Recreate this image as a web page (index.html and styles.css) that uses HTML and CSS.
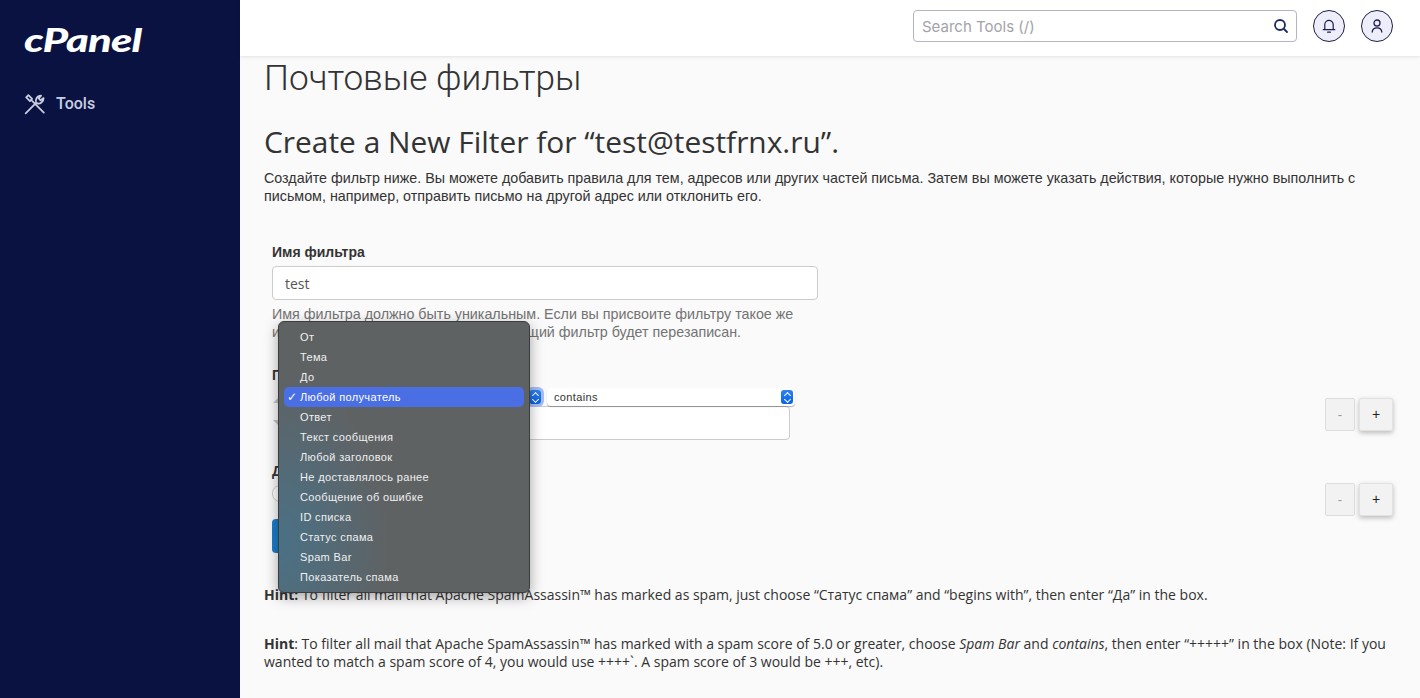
FILE: index.html
```html
<!DOCTYPE html>
<html lang="ru">
<head>
<meta charset="utf-8">
<title>Почтовые фильтры</title>
<link rel="stylesheet" href="styles.css">
</head>
<body>
<div class="app">
  <aside class="sidebar">
    <div class="logo">cPanel</div>
    <nav class="nav">
      <a class="nav-item">
        <svg class="nav-icon" viewBox="0 0 20 20" fill="none" stroke="currentColor" stroke-width="1.6" stroke-linecap="round" stroke-linejoin="round">
          <path d="M1.5 18.5 L11 9 C10 6.5 11.5 2.4 15.5 2.4 L13.4 5 L15 6.6 L17.8 4.6 C18 8 14.5 10.5 11.6 9.2"/>
          <path d="M2 4 L4 2 L7.4 5.4 L5.4 7.4 Z M7.4 7.2 L18 17.8"/>
        </svg>
        <span>Tools</span>
      </a>
    </nav>
  </aside>
  <div class="main">
    <header class="topbar">
      <div class="search">
        <span class="search-text">Search Tools (/)</span>
        <svg class="search-icon" viewBox="0 0 16 16" fill="none" stroke="#1b2a5e" stroke-width="1.8" stroke-linecap="round"><circle cx="7" cy="7" r="5"/><path d="M11 11 L14 14"/></svg>
      </div>
      <button class="round-btn" aria-label="Notifications">
        <svg viewBox="0 0 16 16" fill="none" stroke="#1b1f4b" stroke-width="1.2" stroke-linecap="round" stroke-linejoin="round"><path d="M2.2 11.6 H13.8 M3.8 11.6 V6.6 A4.2 4.2 0 0 1 12.2 6.6 V11.6"/><path d="M6.6 14.2 H9.4"/></svg>
      </button>
      <button class="round-btn" aria-label="User">
        <svg viewBox="0 0 16 16" fill="none" stroke="#1b1f4b" stroke-width="1.3" stroke-linecap="round"><circle cx="8" cy="5" r="3"/><path d="M3.2 14 C3.4 10.8 5.6 9.8 8 9.8 C10.4 9.8 12.6 10.8 12.8 14"/></svg>
      </button>
    </header>
    <main class="content">
      <h1 class="title">Почтовые фильтры</h1>
      <h2 class="subtitle">Create a New Filter for “test@testfrnx.ru”.</h2>
      <p class="intro">Создайте фильтр ниже. Вы можете добавить правила для тем, адресов или других частей письма. Затем вы можете указать действия, которые нужно выполнить с письмом, например, отправить письмо на другой адрес или отклонить его.</p>

      <form class="form">
        <label class="label">Имя фильтра</label>
        <div class="name-input">test</div>
        <p class="help">Имя фильтра должно быть уникальным. Если вы присвоите фильтру такое же имя, как у существующего, существующий фильтр будет перезаписан.</p>

        <label class="label rules-label">Правила</label>
        <div class="rule">
          <div class="rule-fields">
            <div class="selects">
              <div class="select select-open"><span>Любой получатель</span><i class="stepper"></i></div>
              <div class="select select-wide"><span>contains</span><i class="stepper"></i></div>
            </div>
            <div class="value-input"></div>
          </div>
          <div class="pm">
            <button type="button" class="pm-btn minus">-</button>
            <button type="button" class="pm-btn plus">+</button>
          </div>
        </div>

        <label class="label actions-label">Действия</label>
        <div class="rule action">
          <div class="action-select"></div>
          <div class="pm">
            <button type="button" class="pm-btn minus">-</button>
            <button type="button" class="pm-btn plus">+</button>
          </div>
        </div>

        <button type="button" class="create">Создать</button>
      </form>

      <p class="hint"><b>Hint:</b> To filter all mail that Apache SpamAssassin™ has marked as spam, just choose “Статус спама” and “begins with”, then enter “Да” in the box.</p>
      <p class="hint hint-2"><b>Hint</b>: To filter all mail that Apache SpamAssassin™ has marked with a spam score of 5.0 or greater, choose <em>Spam Bar</em> and <em>contains</em>, then enter “+++++” in the box (Note: If you wanted to match a spam score of 4, you would use ++++`. A spam score of 3 would be +++, etc).</p>
    </main>
  </div>
</div>

<ul class="menu">
  <li>От</li>
  <li>Тема</li>
  <li>До</li>
  <li class="selected">Любой получатель</li>
  <li>Ответ</li>
  <li>Текст сообщения</li>
  <li>Любой заголовок</li>
  <li>Не доставлялось ранее</li>
  <li>Сообщение об ошибке</li>
  <li>ID списка</li>
  <li>Статус спама</li>
  <li>Spam Bar</li>
  <li>Показатель спама</li>
</ul>
</body>
</html>
```

FILE: styles.css
```css
* { box-sizing: border-box; }
html, body { margin: 0; height: 100%; overflow: hidden; }
body { font-family: "Liberation Sans", Arial, sans-serif; color: #333; background: #fafafa; }

.app { display: flex; height: 698px; }

.sidebar { width: 240px; flex: none; background: #0a1241; color: #fff; padding: 24px 24px 0; }
.logo { font-family: Lato, sans-serif; font-weight: 900; font-style: italic; font-size: 32px; line-height: 32px; letter-spacing: -0.6px; color: #fff; transform: scaleX(1.36); transform-origin: left center; }
.nav { margin-top: 36px; }
.nav-item { display: flex; align-items: center; gap: 10px; color: #c8cfe0; font-family: Roboto, sans-serif; font-weight: 500; font-size: 16px; line-height: 24px; }
.nav-icon { width: 22px; height: 22px; flex: none; }

.main { flex: 1; min-width: 0; display: flex; flex-direction: column; }
.topbar { height: 56px; flex: none; background: #fff; box-shadow: 0 1px 3px rgba(0,0,0,.10); display: flex; align-items: center; justify-content: flex-end; gap: 16px; padding: 0 27px 4px 0; position: relative; z-index: 1; }
.search { width: 384px; height: 32px; border: 1px solid #b4b4c4; border-radius: 4px; background: #fff; display: flex; align-items: center; justify-content: space-between; padding: 0 7px 0 8px; }
.search-text { font-family: Inter, sans-serif; font-size: 15px; color: #a3a3a8; }
.search-icon { width: 16px; height: 16px; }
.round-btn { width: 32px; height: 32px; padding: 7px; border-radius: 50%; border: 1px solid #1b1f4b; background: #eeeefa; display: block; }
.round-btn svg { display: block; width: 16px; height: 16px; }

.content { flex: 1; padding: 0 24px; }
.title { margin: 0; font-family: Roboto, sans-serif; font-weight: 300; font-size: 35.2px; line-height: 44px; color: #333; }
.subtitle { margin: 21px 0 0; font-family: "Open Sans", sans-serif; font-weight: 400; font-size: 29.9px; line-height: 42px; color: #333; }
.intro { margin: 6px 0 0; font-size: 14.3px; line-height: 18.4px; color: #333; }

.form { margin-top: 36px; padding-left: 8px; }
.label { display: block; font-weight: 700; font-size: 14px; line-height: 20px; color: #333; }
.name-input { width: 546px; height: 34px; margin-top: 4px; border: 1px solid #ccc; border-radius: 4px; background: #fff; padding: 0 12px; font-family: "Open Sans", sans-serif; font-size: 14px; line-height: 34px; color: #555; }
.help { width: 530px; margin: 5px 0 0; font-size: 14.3px; line-height: 18px; color: #737373; }

.rules-label { margin-top: 24px; }
.rule { display: flex; align-items: flex-start; justify-content: space-between; margin-top: 3px; }
.rule-fields { width: 518px; flex: none; position: relative; }
.rule-fields::before, .rule-fields::after { content: ""; position: absolute; left: 1px; border-left: 5px solid transparent; border-bottom: 5px solid #c4c4c4; }
.rule-fields::before { top: 10px; }
.rule-fields::after { top: 32px; border-bottom: 0; border-top: 5px solid #c4c4c4; }
.selects { display: flex; gap: 4px; height: 18px; width: 530px; }
.select { height: 18px; background: #fff; border-radius: 4px; font-size: 11px; line-height: 18px; padding-left: 7px; display: flex; justify-content: space-between; align-items: center; box-shadow: 0 1px 1px rgba(0,0,0,.3); color: #333; letter-spacing: .35px; flex: none; }
.select-open { width: 271px; background: transparent; box-shadow: none; padding-right: 2px; }
.select-open span { visibility: hidden; }
.select-open .stepper { box-shadow: 0 0 0 3px #a9bdf3; }
.select-wide { width: 248px; padding-right: 2px; }
.stepper { display: block; width: 12px; height: 14px; border-radius: 3px; background: linear-gradient(#2b82f6, #0a60e0); position: relative; flex: none; }
.stepper::before, .stepper::after { content: ""; position: absolute; left: 4px; width: 4px; height: 4px; border-left: 1px solid #fff; border-top: 1px solid #fff; transform: rotate(45deg); }
.stepper::before { top: 3px; }
.stepper::after { top: 7px; transform: rotate(225deg); }
.value-input { height: 34px; margin-left: 8px; border: 1px solid #ccc; border-radius: 4px; background: #fff; }
.pm { display: flex; gap: 4px; margin-top: 10px; margin-right: 3px; flex: none; }
.pm-btn { width: 30px; height: 33px; padding: 0; border: 1px solid #ddd; border-radius: 2px; background: #f2f2f2; font-family: "Liberation Sans", sans-serif; font-size: 13px; color: #999; }
.plus { width: 34px; border-color: #e2e2e2; color: #222; box-shadow: 0 2px 5px rgba(0,0,0,.25); font-size: 14px; }

.actions-label { margin-top: 21px; }
.action { margin-top: 0; height: 33px; }
.action-select { width: 60px; height: 17px; margin-top: 4px; border: 1px solid #ccc; border-radius: 8px; background: #fff; }
.action .pm { margin-top: 2px; }

.create { display: block; margin-top: 5px; width: 90px; height: 34px; border: 0; border-radius: 4px; background: #1b7cc8; color: #fff; font-size: 14px; }

.hint { margin: 33px 0 0; font-family: "Open Sans", sans-serif; font-size: 14px; line-height: 18px; color: #333; }
.hint-2 { margin-top: 31px; }

.menu { position: absolute; left: 278px; top: 321px; width: 252px; height: 272px; margin: 0; padding: 5px; list-style: none; border-radius: 6px; border: 1px solid #3a3c3d; background: radial-gradient(ellipse 110px 170px at 0% 82%, #4a7186, rgba(95,98,99,0)), #5f6263; box-shadow: 0 4px 14px rgba(0,0,0,.35); z-index: 5; }
.menu li { height: 20px; line-height: 20px; padding-left: 16px; font-size: 11px; letter-spacing: .35px; color: #f0f0f0; position: relative; border-radius: 5px; }
.menu .selected { background: #4a6fe4; color: #fff; }
.menu .selected::before { content: "✓"; position: absolute; left: 3px; top: 0; font-family: "DejaVu Sans", sans-serif; font-size: 12px; font-weight: 700; }
```
